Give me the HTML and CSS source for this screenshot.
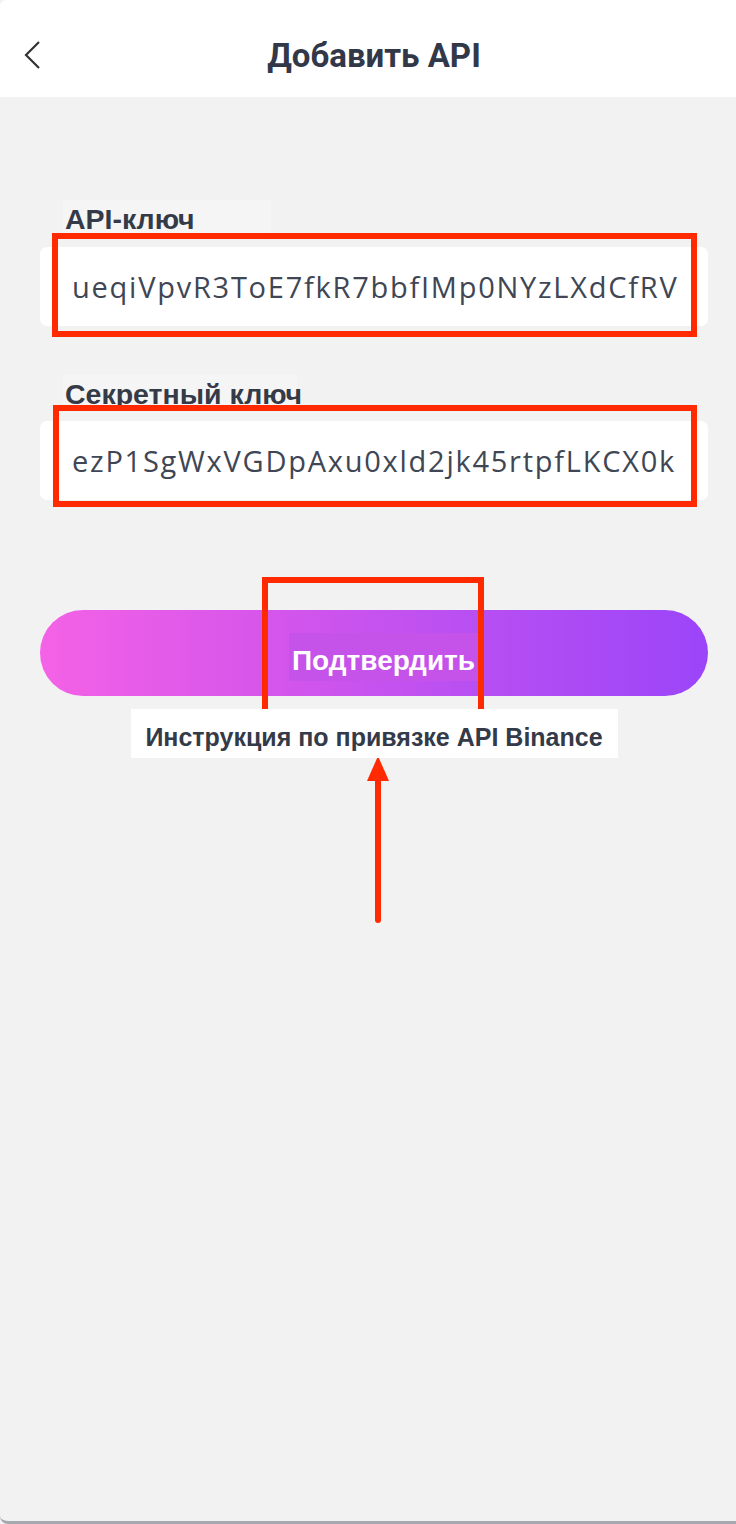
FILE: index.html
```html
<!DOCTYPE html>
<html lang="ru">
<head>
    <meta charset="UTF-8">
    <meta name="viewport" content="width=device-width, initial-scale=1.0">
    <title>Добавить API</title>
    <link rel="stylesheet" href="styles.css">
</head>
<body>
    <div class="page">
        <div class="header">
            <a class="back" href="#">
                <svg width="20" height="30" viewBox="0 0 20 30">
                    <path d="M17 2 L4 15 L17 28" fill="none" stroke="#333" stroke-width="2.2"/>
                </svg>
            </a>
            <h1>Добавить API</h1>
        </div>

        <div class="content">
            <div class="form-group first">
                <label class="field-label key-label">API-ключ</label>
                <div class="field"><div class="field-text">ueqiVpvR3ToE7fkR7bbfIMp0NYzLXdCfRV</div></div>
            </div>

            <div class="form-group">
                <label class="field-label secret-label">Секретный ключ</label>
                <div class="field"><div class="field-text">ezP1SgWxVGDpAxu0xld2jk45rtpfLKCX0kmQ</div></div>
            </div>

            <button class="submit-btn"><span>Подтвердить</span></button>

            <div class="guide">
                <span>Инструкция по привязке API Binance</span>
            </div>
        </div>

        <!-- пометки поверх скриншота -->
        <div class="mark mark-key"></div>
        <div class="mark mark-secret"></div>
        <div class="mark mark-btn"></div>
        <div class="arrow">
            <div class="arrow-head"></div>
            <div class="arrow-line"></div>
        </div>
    </div>
</body>
</html>
```

FILE: styles.css
```css
* {
    box-sizing: border-box;
}
body {
    margin: 0;
    background-color: #f2f2f2;
    font-family: "Liberation Sans", Arial, sans-serif;
    color: #343a48;
}
.page {
    position: relative;
    height: 1524px;
    border-bottom: 3px solid #a5a8ae;
    border-bottom-left-radius: 8px;
    overflow: hidden;
}
.header {
    position: relative;
    height: 97px;
    background-color: #fff;
    display: flex;
    align-items: flex-start;
    justify-content: center;
    border-top-left-radius: 6px;
}
.header h1 {
    margin: 37px 0 0;
    font-family: "Liberation Sans Narrow", Roboto, sans-serif;
    font-size: 33px;
    line-height: 38px;
    font-weight: bold;
    color: #323848;
    padding-left: 12px;
}
.back {
    position: absolute;
    left: 22px;
    top: 40px;
    display: block;
}
.content {
    padding: 0 28px 0 40px;
}
.form-group {
    margin-top: 49px;
}
.form-group.first {
    margin-top: 103px;
}
.field-label {
    display: block;
    margin-left: 23px;
    padding-left: 2px;
    height: 36px;
    font-size: 28.5px;
    font-weight: bold;
    line-height: 38px;
    background-color: #f5f5f5;
    border-bottom: 1px solid #fff;
    white-space: nowrap;
}
.key-label {
    width: 208px;
}
.secret-label {
    width: 234px;
    height: 35px;
}
.field {
    margin-top: 11px;
    height: 79px;
    background-color: #fff;
    border-radius: 7px;
    padding: 0 30px 0 32px;
}
.field-text {
    font-family: "Open Sans", sans-serif;
    font-size: 29px;
    letter-spacing: 1.75px;
    line-height: 79px;
    color: #404654;
    white-space: nowrap;
    overflow: hidden;
}
.submit-btn {
    display: flex;
    align-items: flex-start;
    justify-content: center;
    width: 100%;
    height: 86px;
    margin-top: 110px;
    border: none;
    border-radius: 43px;
    background: linear-gradient(90deg, #f462e6 0%, #d957ea 30%, #b84ff2 65%, #9b45f9 100%);
    padding: 23px 0 0;
}
.submit-btn span {
    display: block;
    margin-left: 20px;
    padding: 7px 4px 0 3px;
    height: 48px;
    line-height: 41px;
    background-color: #c553e9;
    color: #fff;
    font-family: "Liberation Sans", Arial, sans-serif;
    font-size: 28px;
    font-weight: bold;
}
.guide {
    display: flex;
    justify-content: center;
    margin-top: 13px;
}
.guide span {
    position: relative;
    z-index: 1;
    display: block;
    width: 487px;
    height: 49px;
    background-color: #fff;
    text-align: center;
    padding-top: 7px;
    line-height: 42px;
    font-size: 25px;
    font-weight: bold;
    color: #343a48;
}
.mark {
    position: absolute;
    border: 6px solid #ff2a00;
}
.mark-key {
    left: 52px;
    top: 233px;
    width: 645px;
    height: 104px;
}
.mark-secret {
    left: 53px;
    top: 405px;
    width: 644px;
    height: 102px;
}
.mark-btn {
    left: 262px;
    top: 577px;
    width: 222px;
    height: 150px;
}
.arrow {
    position: absolute;
    left: 367px;
    top: 756px;
    width: 22px;
    display: flex;
    flex-direction: column;
    align-items: center;
}
.arrow-head {
    width: 0;
    height: 0;
    border-left: 11px solid transparent;
    border-right: 11px solid transparent;
    border-bottom: 25px solid #ff2a00;
}
.arrow-line {
    width: 6px;
    height: 142px;
    background-color: #ff2a00;
    border-radius: 0 0 3px 3px;
}
```
